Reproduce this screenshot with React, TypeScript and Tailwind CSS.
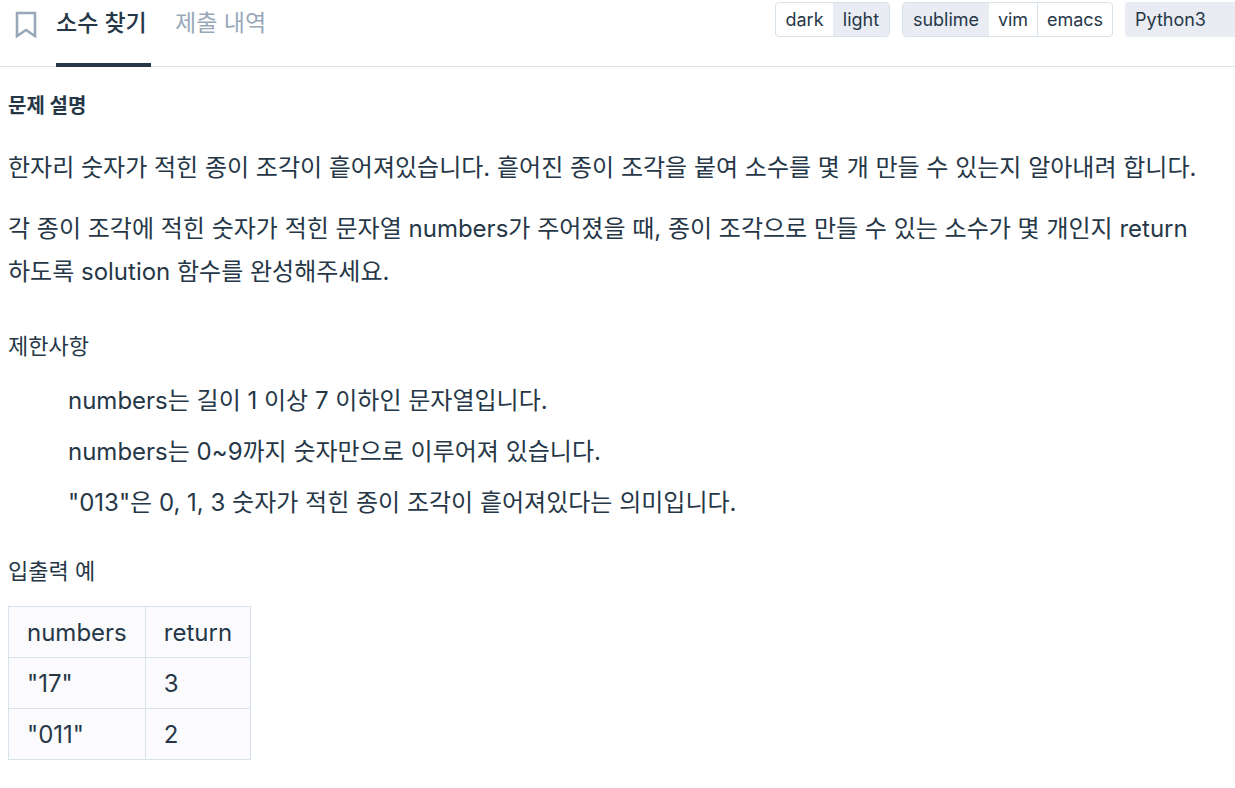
const constraints = [
  { text: 'numbers는 길이 1 이상 7 이하인 문자열입니다.', width: 'w-[474px]' },
  { text: 'numbers는 0~9까지 숫자만으로 이루어져 있습니다.', width: 'w-[526px]' },
  { text: '"013"은 0, 1, 3 숫자가 적힌 종이 조각이 흩어져있다는 의미입니다.', width: 'w-[660px]' },
];

const rows = [
  ['"17"', '3'],
  ['"011"', '2'],
];

export default function App() {
  return (
    <div className="h-[788px] w-[1235px] overflow-hidden bg-white font-['Inter','Noto_Sans_CJK_KR',sans-serif] text-[#263747]">
      <header className="flex h-[67px] items-start border-b border-[#d7e2eb]">
        <svg className="ml-[15px] mt-[11px] h-7 w-[22px] shrink-0" viewBox="0 0 22 28" fill="none" stroke="#98a8b9" strokeWidth="2.6">
          <path d="M2 2H20V25L11 19L2 25Z" />
        </svg>
        <nav className="ml-[19px] flex gap-6 text-[23px] leading-[46px] whitespace-nowrap">
          <a className="h-[67px] w-[95px] border-b-4 border-[#263747] font-medium">소수 찾기</a>
          <a className="text-[#98a8b9]">제출 내역</a>
        </nav>
        <div className="ml-auto mt-0.5 flex gap-3 text-[18px] leading-[33px]">
          <div className="flex h-[35px] rounded border border-[#d7e2eb]">
            <button className="w-[57px]">dark</button>
            <button className="w-[56px] bg-[#e9ecf3]">light</button>
          </div>
          <div className="flex h-[35px] rounded border border-[#d7e2eb]">
            <button className="w-[86px] bg-[#e9ecf3]">sublime</button>
            <button className="w-[48px]">vim</button>
            <button className="w-[75px] border-l border-[#d7e2eb]">emacs</button>
          </div>
          <button className="flex h-[35px] w-[110px] items-center rounded-l bg-[#e9ecf3] pl-2.5">Python3</button>
        </div>
      </header>
      <main className="px-2 text-[24px] leading-[43px]">
        <h1 className="mt-6 text-[20px] leading-[30px] font-bold">문제 설명</h1>
        <p className="mt-[25px] whitespace-nowrap">한자리 숫자가 적힌 종이 조각이 흩어져있습니다. 흩어진 종이 조각을 붙여 소수를 몇 개 만들 수 있는지 알아내려 합니다.</p>
        <p className="mt-[18px] whitespace-nowrap">
          각 종이 조각에 적힌 숫자가 적힌 문자열 numbers가 주어졌을 때, 종이 조각으로 만들 수 있는 소수가 몇 개인지 return
          <br />
          하도록 solution 함수를 완성해주세요.
        </p>
        <h2 className="mt-[38px] text-[22px] leading-[30px]">제한사항</h2>
        <ul className="mt-[18px] flex flex-col gap-2">
          {constraints.map(({ text, width }) => (
            <li key={text} className={`ml-[60px] whitespace-nowrap ${width}`}>{text}</li>
          ))}
        </ul>
        <h2 className="mt-[32px] text-[22px] leading-[30px]">입출력 예</h2>
        <table className="mt-5 border-collapse bg-[#fbfbfd]">
          <tbody>
            {[['numbers', 'return'], ...rows].map(([a, b]) => (
              <tr key={a} className="h-[51px]">
                <td className="w-[135px] border border-[#d7e2eb] px-[18px]">{a}</td>
                <td className="w-[104px] border border-[#d7e2eb] px-[18px]">{b}</td>
              </tr>
            ))}
          </tbody>
        </table>
      </main>
    </div>
  );
}
